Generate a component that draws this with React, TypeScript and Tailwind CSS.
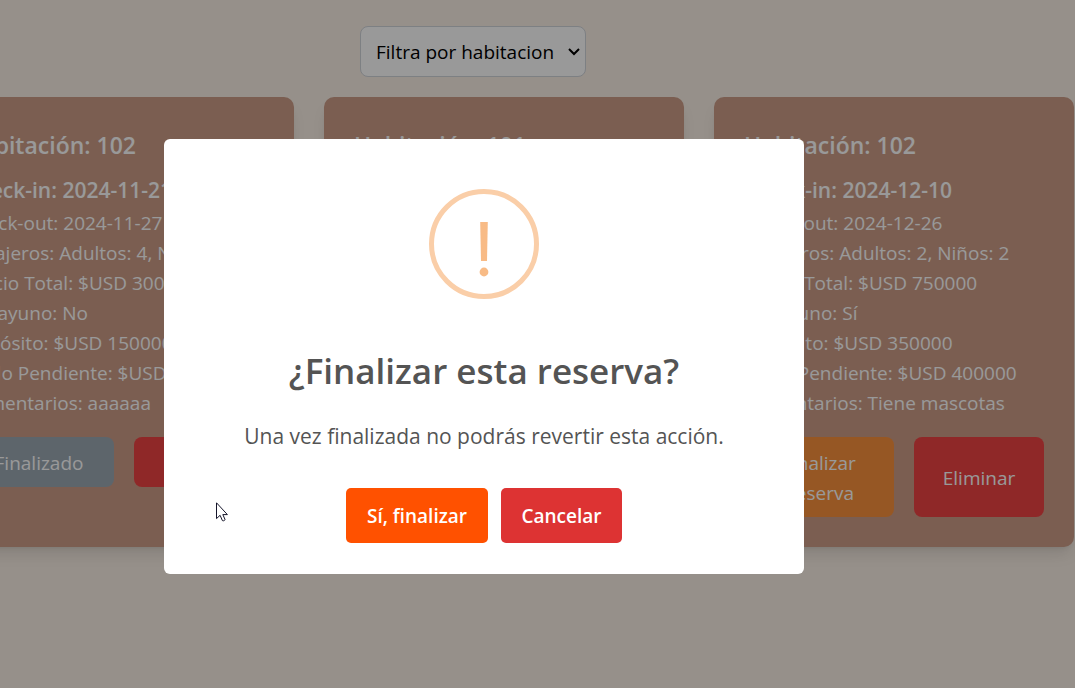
import React from "react";

type Reservation = {
  room: string;
  checkIn: string;
  details: string[];
  finished: boolean;
};

const reservations: Reservation[] = [
  {
    room: "102",
    checkIn: "2024-11-21",
    details: [
      "Check-out: 2024-11-27",
      "Pasajeros: Adultos: 4, Niños: 0",
      "Precio Total: $USD 300000",
      "Desayuno: No",
      "Depósito: $USD 150000",
      "Saldo Pendiente: $USD 150000",
      "Comentarios: aaaaaa",
    ],
    finished: true,
  },
  { room: "101", checkIn: "", details: [], finished: false },
  {
    room: "102",
    checkIn: "2024-12-10",
    details: [
      "Check-out: 2024-12-26",
      "Pasajeros: Adultos: 2, Niños: 2",
      "Precio Total: $USD 750000",
      "Desayuno: Sí",
      "Depósito: $USD 350000",
      "Saldo Pendiente: $USD 400000",
      "Comentarios: Tiene mascotas",
    ],
    finished: false,
  },
];

function ReservationCard({ room, checkIn, details, finished }: Reservation) {
  return (
    <article className="w-[360px] shrink-0 rounded-[10px] bg-[#cd9d88] px-[30px] pt-[31px] pb-[30px] text-white shadow-lg">
      <h2 className="mb-[10px] text-[23px] leading-[35px] font-semibold">Habitación: {room}</h2>
      {checkIn && (
        <>
          <p className="text-[21px] leading-[35px] font-semibold">Check-in: {checkIn}</p>
          {details.map((line) => (
            <p key={line} className="text-[19px] leading-[30px] whitespace-nowrap">
              {line}
            </p>
          ))}
          <div className="mt-[19px] flex gap-5 text-[19px] leading-[30px]">
            {finished ? (
              <button type="button" className="flex-1 rounded-lg bg-[#9ca8b3] pt-[11px] pb-[9px]">
                Finalizado
              </button>
            ) : (
              <button type="button" className="flex-1 rounded-lg bg-[#fb923c] px-[30px] pt-[11px] pb-[9px]">
                Finalizar Reserva
              </button>
            )}
            <button type="button" className="w-[130px] rounded-lg bg-[#ef4444] pt-[11px] pb-[9px]">
              Eliminar
            </button>
          </div>
        </>
      )}
    </article>
  );
}

function ConfirmDialog() {
  return (
    <div className="fixed inset-0 flex items-start justify-center bg-black/40 pt-[139px] pr-[107px]">
      <div
        role="dialog"
        aria-modal="true"
        aria-labelledby="dialog-title"
        aria-describedby="dialog-text"
        className="relative flex w-[640px] flex-col items-center rounded-md bg-white pt-[50px] pb-[31px]"
      >
        <svg viewBox="0 0 110 110" className="size-[110px]" aria-hidden="true">
          <circle cx="55" cy="55" r="52.5" fill="none" stroke="#facea8" strokeWidth="5" />
          <path d="M51.2 33h7.6l-.8 39h-6z" fill="#f8bb86" />
          <circle cx="55" cy="83" r="4.4" fill="#f8bb86" />
        </svg>
        <h1 id="dialog-title" className="mt-[48px] text-[35px] leading-[48px] font-semibold text-[#545454]">
          ¿Finalizar esta reserva?
        </h1>
        <p id="dialog-text" className="mt-6 text-[21px] leading-[34px] text-[#545454]">
          Una vez finalizada no podrás revertir esta acción.
        </p>
        <div className="mt-[35px] flex gap-[13px] text-[19px] leading-[31px] font-semibold text-white">
          <button type="button" className="w-[142px] rounded-[5px] bg-[#ff5100] pt-[13px] pb-[11px]">
            Sí, finalizar
          </button>
          <button type="button" className="w-[121px] rounded-[5px] bg-[#dd3333] pt-[13px] pb-[11px]">
            Cancelar
          </button>
        </div>
        <svg viewBox="0 0 12 20" className="absolute top-[363px] left-[52px] h-5 w-3" aria-hidden="true">
          <path
            d="M.5.8v15.8l3.6-3.3 2.3 5.3c1.2.6 2.6-.1 2.6-1.2l-2.2-4.8h4.6z"
            fill="#fff"
            stroke="#15152a"
            strokeWidth="1"
          />
        </svg>
      </div>
    </div>
  );
}

export default function App() {
  return (
    <div className="min-h-screen overflow-hidden bg-[#faf0e6] font-['Open_Sans','Noto_Sans',sans-serif]">
      <main>
        <div className="flex justify-center pt-[26px] pr-[129px]">
          <div className="relative w-[226px]">
            <select
              aria-label="Filtra por habitacion"
              className="h-[51px] w-full appearance-none rounded-lg border border-[#d1d5db] bg-white pt-[2px] pl-[15px] text-[19px] text-black"
            >
              <option>Filtra por habitacion</option>
              <option>101</option>
              <option>102</option>
            </select>
            <svg
              viewBox="0 0 12 8"
              className="pointer-events-none absolute top-[22px] right-[6px] h-2 w-3"
              fill="none"
              stroke="#000"
              strokeWidth="2"
              aria-hidden="true"
            >
              <path d="M1 1l5 5 5-5" />
            </svg>
          </div>
        </div>
        <section className="mt-5 flex justify-end gap-[30px] pr-px">
          {reservations.map((reservation, index) => (
            <ReservationCard key={index} {...reservation} />
          ))}
        </section>
      </main>
      <ConfirmDialog />
    </div>
  );
}
